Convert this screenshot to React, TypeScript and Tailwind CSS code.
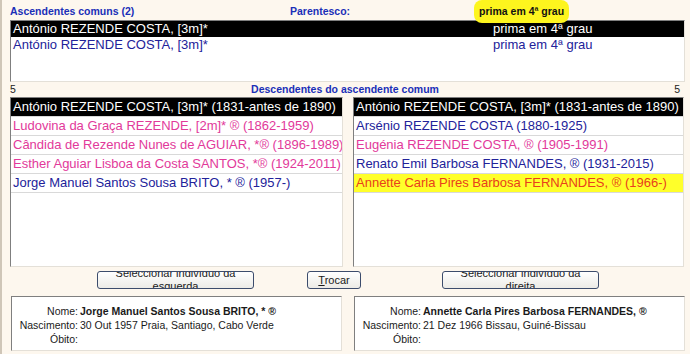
import React from 'react'

type Row = { text: string; tone: 'sel' | 'blue' | 'pink' | 'mark' }

const left: Row[] = [
  { text: 'António REZENDE COSTA, [3m]* (1831-antes de 1890)', tone: 'sel' },
  { text: 'Ludovina da Graça REZENDE, [2m]* ® (1862-1959)', tone: 'pink' },
  { text: 'Cândida de Rezende Nunes de AGUIAR, *® (1896-1989)', tone: 'pink' },
  { text: 'Esther Aguiar Lisboa da Costa SANTOS, *® (1924-2011)', tone: 'pink' },
  { text: 'Jorge Manuel Santos Sousa BRITO, * ® (1957-)', tone: 'blue' },
]

const right: Row[] = [
  { text: 'António REZENDE COSTA, [3m]* (1831-antes de 1890)', tone: 'sel' },
  { text: 'Arsénio REZENDE COSTA (1880-1925)', tone: 'blue' },
  { text: 'Eugénia REZENDE COSTA, ® (1905-1991)', tone: 'pink' },
  { text: 'Renato Emil Barbosa FERNANDES, ® (1931-2015)', tone: 'blue' },
  { text: 'Annette Carla Pires Barbosa FERNANDES, ® (1966-)', tone: 'mark' },
]

const toneCls = {
  sel: 'bg-black text-white',
  blue: 'text-[#22229a]',
  pink: 'text-[#e2399a]',
  mark: 'bg-[#ffff2a] text-[#e8401c]',
}

const sunken = 'border border-t-[#7f7f7f] border-l-[#7f7f7f] border-r-[#e4e0d8] border-b-[#e4e0d8] bg-white'

function DescList({ rows }: { rows: Row[] }) {
  return (
    <div className={`${sunken} h-[170px] overflow-hidden`}>
      {rows.map((r, i) => (
        <div
          key={i}
          className={`h-[19px] whitespace-nowrap overflow-hidden border-b border-[#d9d9d9] pl-[2px] text-[13px] leading-[18px] ${toneCls[r.tone]}`}
        >
          {r.text}
        </div>
      ))}
    </div>
  )
}

function Btn({ lines }: { lines: string[] }) {
  return (
    <button className="flex h-[18px] w-[157px] flex-col items-center justify-center overflow-hidden rounded-[3px] border border-[#3c4c6c] bg-gradient-to-b from-white to-[#ecebe6] text-[11px] leading-[13px] text-[#1a1a1a]">
      {lines.map((l) => (
        <span key={l} className="block shrink-0">
          {l}
        </span>
      ))}
    </button>
  )
}

function Info({ nome, nasc }: { nome: string; nasc: string }) {
  return (
    <div className={`${sunken} h-[55px] pt-[7px] text-[10.5px] leading-[14px] text-[#1a1a1a]`}>
      <div className="grid grid-cols-[66px_1fr] gap-x-[2px]">
        <span className="text-right">Nome:</span>
        <span className="font-bold">{nome}</span>
        <span className="text-right">Nascimento:</span>
        <span>{nasc}</span>
        <span className="text-right">Óbito:</span>
        <span />
      </div>
    </div>
  )
}

export default function App() {
  return (
    <div
      className="h-[354px] w-[690px] overflow-hidden border-l-2 border-[#cfc6b8] bg-[#fdf7ee] pl-[8px] pr-[5px]"
      style={{ fontFamily: '"Liberation Sans", Arial, sans-serif' }}
    >
      {/* cabeçalho */}
      <div className="flex h-[20px] items-start text-[10.5px] font-bold text-[#1a2fb8]">
        <span className="mt-[4px] w-[280px]">Ascendentes comuns (2)</span>
        <span className="mt-[4px]">Parentesco:</span>
        <span className="ml-[124px] rounded-[8px] bg-[#fdf51e] px-[5px] pb-[3px] pt-[4px] text-[#111]">
          prima em 4ª grau
        </span>
      </div>

      <div className={`${sunken} h-[62px] text-[13px] leading-[16px]`}>
        {[0, 1].map((i) => (
          <div key={i} className={`flex h-[16px] ${i === 0 ? 'bg-black text-white' : 'text-[#22229a]'}`}>
            <span className="w-[482px] pl-[2px]">António REZENDE COSTA, [3m]*</span>
            <span>prima em 4ª grau</span>
          </div>
        ))}
      </div>

      <div className="flex h-[15px] items-center justify-between text-[10.5px]">
        <span className="text-[#222]">5</span>
        <span className="font-bold text-[#1a2fb8]">Descendentes do ascendente comum</span>
        <span className="pr-[5px] text-[#222]">5</span>
      </div>

      <div className="grid grid-cols-[333px_331px] gap-x-[10px]">
        <DescList rows={left} />
        <DescList rows={right} />
      </div>

      <div className="mt-[4px] flex h-[20px] items-start pl-[87px]">
        <Btn lines={['Seleccionar indivíduo da', 'esquerda']} />
        <button className="ml-[53px] h-[18px] w-[54px] rounded-[3px] border border-[#3c4c6c] bg-gradient-to-b from-white to-[#ecebe6] text-[11px] text-[#1a1a1a]">
          <span className="underline">T</span>rocar
        </button>
        <div className="ml-[81px]">
          <Btn lines={['Seleccionar indivíduo da', 'direita']} />
        </div>
      </div>

      <div className="mt-[5px] grid grid-cols-[331px_331px] gap-x-[12px] pl-[1px]">
        <Info nome="Jorge Manuel Santos Sousa BRITO, * ®" nasc="30 Out 1957 Praia, Santiago, Cabo Verde" />
        <Info nome="Annette Carla Pires Barbosa FERNANDES, ®" nasc="21 Dez 1966 Bissau, Guiné-Bissau" />
      </div>
    </div>
  )
}
